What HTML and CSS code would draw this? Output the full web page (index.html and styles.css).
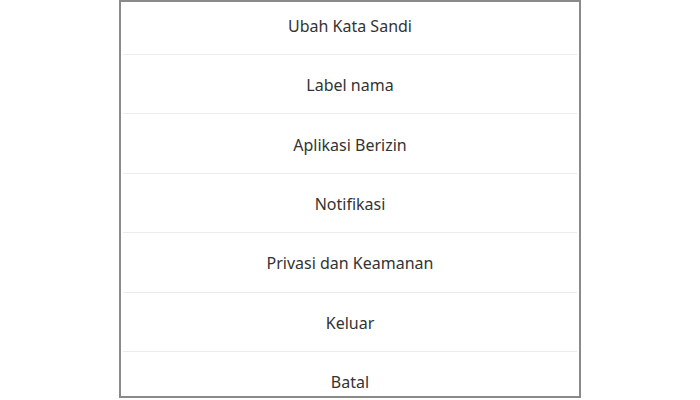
FILE: index.html
```html
<!DOCTYPE html>
<html lang="id">
<head>
<meta charset="utf-8">
<title>Menu</title>
<link rel="stylesheet" href="styles.css">
</head>
<body>
<div class="sheet">
  <ul class="menu">
    <li class="item">Ubah Kata Sandi</li>
    <li class="item">Label nama</li>
    <li class="item">Aplikasi Berizin</li>
    <li class="item">Notifikasi</li>
    <li class="item">Privasi dan Keamanan</li>
    <li class="item">Keluar</li>
    <li class="item">Batal</li>
  </ul>
</div>
</body>
</html>
```

FILE: styles.css
```css
html, body {
  margin: 0;
  padding: 0;
  background: #ffffff;
}
body {
  width: 700px;
  height: 400px;
  overflow: hidden;
}
.sheet {
  box-sizing: border-box;
  width: 462px;
  height: 398px;
  margin: 0 auto;
  border: 2px solid #8a8a8a;
  overflow: hidden;
  background: #ffffff;
}
.menu {
  list-style: none;
  margin: -6.4px 0 0 0;
  padding: 0;
}
.item {
  box-sizing: content-box;
  height: 56.4px;
  padding-top: 2px;
  margin: 0 2px;
  border-bottom: 1px solid #ececec;
  display: flex;
  align-items: center;
  justify-content: center;
  font-family: "Noto Sans", "Open Sans", sans-serif;
  font-size: 16px;
  color: #333333;
}
```
